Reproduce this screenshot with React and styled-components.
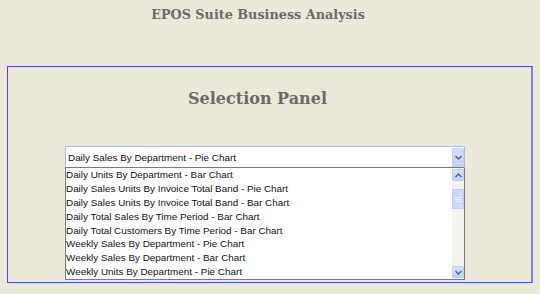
import React from "react";
import styled, { createGlobalStyle } from "styled-components";

const Global = createGlobalStyle`
  html, body { margin: 0; padding: 0; background: #ece9d8; }
  body { width: 540px; height: 294px; overflow: hidden; }
`;

const Page = styled.div`
  display: flex;
  flex-direction: column;
  padding: 0 7px;
`;

const Title = styled.h1`
  margin: 0;
  padding: 6px 24px 0 0;
  height: 66px;
  box-sizing: border-box;
  text-align: center;
  font-family: "DejaVu Serif", "Liberation Serif", serif;
  font-weight: bold;
  font-size: 12.8px;
  line-height: 18px;
  color: #6a6a6a;
`;

const Panel = styled.section`
  border: 1px solid #4646fa;
  border-right: 2px solid #7c7cf4;
  height: 217px;
  box-sizing: border-box;
  display: flex;
  flex-direction: column;
  align-items: flex-start;
`;

const PanelHeading = styled.h2`
  align-self: stretch;
  margin: 0;
  padding: 21px 24px 0 0;
  height: 79px;
  box-sizing: border-box;
  text-align: center;
  font-family: "DejaVu Serif", "Liberation Serif", serif;
  font-weight: bold;
  font-size: 16px;
  line-height: 22px;
  color: #6a6a6a;
`;

const Control = styled.div`
  margin-left: 57px;
  width: 400px;
  display: flex;
  flex-direction: column;
  font-family: "Liberation Sans", Arial, sans-serif;
  font-size: 9.9px;
  color: #111;
`;

const SelectBox = styled.div`
  height: 22px;
  box-sizing: border-box;
  border: 1px solid #a9bde0;
  border-bottom: 1px solid #7b7b7b;
  background: #fff;
  display: flex;
  align-items: center;
  padding-left: 2px;
`;

const SelectText = styled.span`
  flex: 1;
`;

const ArrowBtn = styled.div`
  width: 12px;
  height: ${(p) => p.h}px;
  box-sizing: border-box;
  border: 1px solid #c0cff5;
  border-radius: 1px;
  background: linear-gradient(180deg, #d4e0fd 0%, #bfd0fb 100%);
  display: flex;
  align-items: center;
  justify-content: center;
`;

const ListBox = styled.div`
  height: 112px;
  box-sizing: border-box;
  border: 1px solid #7b7b7b;
  border-top: none;
  background: #fff;
  display: flex;
`;

const Items = styled.ul`
  flex: 1;
  margin: 0;
  padding: 0;
  list-style: none;
  overflow: hidden;
`;

const Item = styled.li`
  height: 13.9px;
  line-height: 13.9px;
  white-space: nowrap;
`;

const Track = styled.div`
  width: 12px;
  background: #f4f3ee;
  display: flex;
  flex-direction: column;
  padding: 1px 0;
  box-sizing: border-box;
`;

const Thumb = styled.div`
  height: 20px;
  margin-top: 8px;
  box-sizing: border-box;
  border: 1px solid #c0cff5;
  background: linear-gradient(90deg, #c6d5fd, #d2defd);
  display: flex;
  align-items: center;
  justify-content: center;
`;

const Spacer = styled.div`
  flex: 1;
`;

const Chevron = ({ up }) => (
  <svg width="7" height="5" viewBox="0 0 7 5">
    <path
      d={up ? "M0.5 4 L3.5 1 L6.5 4" : "M0.5 1 L3.5 4 L6.5 1"}
      fill="none"
      stroke="#4d6185"
      strokeWidth="1.4"
    />
  </svg>
);

const Grip = () => (
  <svg width="6" height="7" viewBox="0 0 6 7">
    <path d="M0 1.5H6M0 3.5H6M0 5.5H6" stroke="#eef2fe" strokeWidth="1" />
  </svg>
);

const items = [
  "Daily Units By Department - Bar Chart",
  "Daily Sales Units By Invoice Total Band - Pie Chart",
  "Daily Sales Units By Invoice Total Band - Bar Chart",
  "Daily Total Sales By Time Period - Bar Chart",
  "Daily Total Customers By Time Period - Bar Chart",
  "Weekly Sales By Department - Pie Chart",
  "Weekly Sales By Department - Bar Chart",
  "Weekly Units By Department - Pie Chart",
];

export default function App() {
  return (
    <>
      <Global />
      <Page>
        <Title>EPOS Suite Business Analysis</Title>
        <Panel>
          <PanelHeading>Selection Panel</PanelHeading>
          <Control>
            <SelectBox>
              <SelectText>Daily Sales By Department - Pie Chart</SelectText>
              <ArrowBtn h={19}>
                <Chevron />
              </ArrowBtn>
            </SelectBox>
            <ListBox>
              <Items>
                {items.map((t) => (
                  <Item key={t}>{t}</Item>
                ))}
              </Items>
              <Track>
                <ArrowBtn h={12}>
                  <Chevron up />
                </ArrowBtn>
                <Thumb>
                  <Grip />
                </Thumb>
                <Spacer />
                <ArrowBtn h={12}>
                  <Chevron />
                </ArrowBtn>
              </Track>
            </ListBox>
          </Control>
        </Panel>
      </Page>
    </>
  );
}
